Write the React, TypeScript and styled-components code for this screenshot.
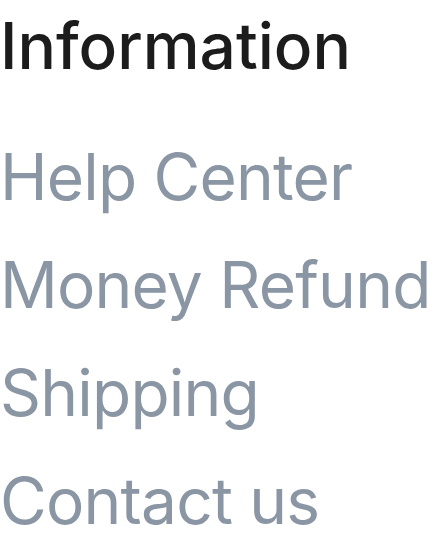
import React, { FC } from 'react';
import styled, { createGlobalStyle } from 'styled-components';

const GlobalStyle = createGlobalStyle`
    html, body {
        margin: 0;
        padding: 0;
        background: #ffffff;
    }
    body {
        font-family: Inter, "Noto Sans", sans-serif;
    }
`;

const Wrapper = styled.div`
    width: 432px;
    padding-top: 7px;
    display: flex;
    flex-direction: column;
`;

const Title = styled.h6`
    margin: 0;
    font-size: 64px;
    line-height: 78px;
    font-weight: 500;
    color: #1c1c1c;
`;

const LinkList = styled.ul`
    list-style: none;
    margin: 38px 0 0 0;
    padding: 0;
`;

const LinkItem = styled.li`
    font-size: 64px;
    line-height: 108px;
    font-weight: 400;
    letter-spacing: -0.8px;
    white-space: nowrap;
`;

const FooterLink = styled.a`
    color: #8b96a5;
    text-decoration: none;
`;

const links = ['Help Center', 'Money Refund', 'Shipping', 'Contact us'];

const App: FC = () => {
    return (
        <>
            <GlobalStyle />
            <Wrapper>
                <Title>Information</Title>
                <LinkList>
                    {links.map(l => (
                        <LinkItem key={l}>
                            <FooterLink href="#">{l}</FooterLink>
                        </LinkItem>
                    ))}
                </LinkList>
            </Wrapper>
        </>
    );
};

export default App;
